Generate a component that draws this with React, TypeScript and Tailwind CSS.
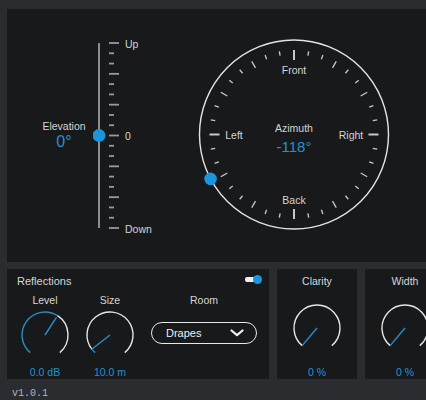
import React from "react";

const BLUE = "#1b95db";
const TEXT_BLUE = "#2591d2";

function polar(cx: number, cy: number, r: number, deg: number) {
  const a = (deg * Math.PI) / 180;
  return [cx + r * Math.sin(a), cy - r * Math.cos(a)];
}

function arc(cx: number, cy: number, r: number, from: number, to: number) {
  const [x1, y1] = polar(cx, cy, r, from);
  const [x2, y2] = polar(cx, cy, r, to);
  const large = to - from > 180 ? 1 : 0;
  return `M ${x1} ${y1} A ${r} ${r} 0 ${large} 1 ${x2} ${y2}`;
}

type KnobProps = {
  value: number; // pointer angle, degrees from top
  fill?: boolean; // draw the blue arc up to the pointer
  length?: number;
};

function Knob({ value, fill = false, length = 22 }: KnobProps) {
  const [px, py] = polar(25, 25, length, value);
  return (
    <svg width={50} height={50} viewBox="0 0 50 50">
      {fill && (
        <path d={arc(25, 25, 23, -140, value)} fill="none" stroke="#2c8cc4" strokeWidth={1.4} />
      )}
      <path
        d={arc(25, 25, 23, fill ? value : -140, 140)}
        fill="none"
        stroke="#e6e6e6"
        strokeWidth={1.4}
      />
      <line x1={25} y1={25} x2={px} y2={py} stroke="#2a8dcc" strokeWidth={1.4} />
    </svg>
  );
}

function ElevationSlider() {
  const ticks = Array.from({ length: 19 }, (_, i) => i);
  return (
    <svg width={101} height={253} viewBox="0 0 101 253" className="shrink-0">
      <line x1={6} y1={34} x2={6} y2={219} stroke="#8e8e8e" strokeWidth={2} />
      {ticks.map((i) => {
        const y = 34 + (i * 185) / 18;
        const long = i % 3 === 0;
        return (
          <line key={i} x1={16} y1={y} x2={long ? 26 : 21} y2={y} stroke="#9a9a9a" strokeWidth={1.8} />
        );
      })}
      <text x={32} y={35} dominantBaseline="central" fill="#d4d4d4" fontSize={10.5}>
        Up
      </text>
      <text x={32} y={127} dominantBaseline="central" fill="#d4d4d4" fontSize={10.5}>
        0
      </text>
      <text x={32} y={220} dominantBaseline="central" fill="#d4d4d4" fontSize={10.5}>
        Down
      </text>
      <circle cx={6} cy={126.5} r={6.5} fill={BLUE} />
      <circle cx={81} cy={185} r={0.6} fill="#1a2466" />
    </svg>
  );
}

function AzimuthDial() {
  const cx = 100;
  const cy = 125.5;
  const ticks = Array.from({ length: 36 }, (_, i) => i * 10);
  const [tx, ty] = polar(cx, cy, 94.5, -118);
  return (
    <svg width={200} height={253} viewBox="0 0 200 253" className="shrink-0">
      <circle cx={cx} cy={cy} r={94.5} fill="none" stroke="#e4e4e4" strokeWidth={1.4} />
      {ticks.map((a) => {
        const inner = a % 90 === 0 ? 74.5 : a % 30 === 0 ? 77 : 80;
        const [x1, y1] = polar(cx, cy, inner, a);
        const [x2, y2] = polar(cx, cy, 84.5, a);
        return (
          <line
            key={a}
            x1={x1}
            y1={y1}
            x2={x2}
            y2={y2}
            stroke="#c8c8c8"
            strokeWidth={a % 90 === 0 ? 2 : 1.3}
          />
        );
      })}
      <text x={cx} y={61} textAnchor="middle" dominantBaseline="central" fill="#d4d4d4" fontSize={10.5}>
        Front
      </text>
      <text x={cx} y={191} textAnchor="middle" dominantBaseline="central" fill="#d4d4d4" fontSize={10.5}>
        Back
      </text>
      <text x={40} y={126} textAnchor="middle" dominantBaseline="central" fill="#d4d4d4" fontSize={10.5}>
        Left
      </text>
      <text x={157} y={126} textAnchor="middle" dominantBaseline="central" fill="#d4d4d4" fontSize={10.5}>
        Right
      </text>
      <text x={cx} y={119} textAnchor="middle" dominantBaseline="central" fill="#d4d4d4" fontSize={10.5}>
        Azimuth
      </text>
      <text x={cx} y={137} textAnchor="middle" dominantBaseline="central" fill={TEXT_BLUE} fontSize={15}>
        -118°
      </text>
      <circle cx={tx} cy={ty} r={6.3} fill={BLUE} />
    </svg>
  );
}

function KnobColumn({ label, value, children }: { label: string; value: string; children: React.ReactNode }) {
  return (
    <div className="flex w-[56px] shrink-0 flex-col items-center">
      <div className="mt-[5px] h-[14px] text-[10.5px] leading-[14px] text-[#d6d6d6]">{label}</div>
      <div className="mt-[3px]">{children}</div>
      <div className="mt-[5px] h-[14px] text-[10.5px] leading-[14px] text-[#2591d2]">{value}</div>
    </div>
  );
}

function SmallPanel({ label, value, angle }: { label: string; value: string; angle: number }) {
  return (
    <div className="flex h-[110px] w-[80px] shrink-0 flex-col items-center bg-[#18191b]">
      <div className="mt-[5px] h-[14px] text-[10.5px] leading-[14px] text-[#d6d6d6]">{label}</div>
      <div className="mt-[15px]">
        <Knob value={angle} length={23} />
      </div>
      <div className="mt-[12px] h-[14px] text-[10.5px] leading-[14px] text-[#2591d2]">{value}</div>
    </div>
  );
}

export default function App() {
  return (
    <div className="flex h-[400px] w-[426px] flex-col overflow-hidden bg-[#2b2c2f] pl-[7px] pt-[9px] font-['Liberation_Sans',Arial,sans-serif]">
      {/* 3D PANNER */}
      <div className="flex h-[253px] shrink-0 items-center bg-[#18191b]">
        <div className="ml-[28px] flex w-[58px] shrink-0 flex-col items-center">
          <span className="text-[10.5px] leading-[13px] text-[#d4d4d4]">Elevation</span>
          <span className="text-[16px] leading-[18px] text-[#2591d2]">0°</span>
        </div>
        <ElevationSlider />
        <AzimuthDial />
      </div>

      {/* LOWER CONTROLS */}
      <div className="mt-[7px] flex h-[110px] shrink-0 gap-[8px]">
        <div className="flex h-[110px] w-[262px] shrink-0 flex-col bg-[#18191b]">
          <div className="flex h-[19px] items-end justify-between pl-[10px] pr-[7px]">
            <span className="text-[11px] leading-[14px] text-[#d6d6d6]">Reflections</span>
            <div className="mb-[4px] flex items-center">
              <div className="h-[5px] w-[10px] rounded-[2px] bg-[#f0f0f0]" />
              <div className="-ml-[2px] h-[9px] w-[9px] rounded-full bg-[#1b95db]" />
            </div>
          </div>
          <div className="flex pl-[10px]">
            <KnobColumn label="Level" value="0.0 dB">
              <Knob value={33} fill length={21} />
            </KnobColumn>
            <div className="ml-[9px]">
              <KnobColumn label="Size" value="10.0 m">
                <Knob value={-128} fill length={24} />
              </KnobColumn>
            </div>
            <div className="ml-[13px] flex w-[106px] shrink-0 flex-col items-center">
              <div className="mt-[5px] h-[14px] text-[10.5px] leading-[14px] text-[#d6d6d6]">Room</div>
              <div className="mt-[15px] flex h-[22px] w-[106px] items-center justify-between rounded-full border-[1.5px] border-[#e8e8e8] pl-[14px] pr-[12px]">
                <span className="text-[11px] text-[#f0f0f0]">Drapes</span>
                <svg width={14} height={8} viewBox="0 0 14 8">
                  <path d="M1.5 1.5 L7 6.2 L12.5 1.5" fill="none" stroke="#f0f0f0" strokeWidth={2.2} strokeLinecap="round" strokeLinejoin="round" />
                </svg>
              </div>
            </div>
          </div>
        </div>
        <SmallPanel label="Clarity" value="0 %" angle={-140} />
        <SmallPanel label="Width" value="0 %" angle={-140} />
      </div>

      <div className="ml-[5px] mt-[9px] font-['Liberation_Mono',monospace] text-[10px] leading-[12px] text-[#b4b4b4]">
        v1.0.1
      </div>
    </div>
  );
}
